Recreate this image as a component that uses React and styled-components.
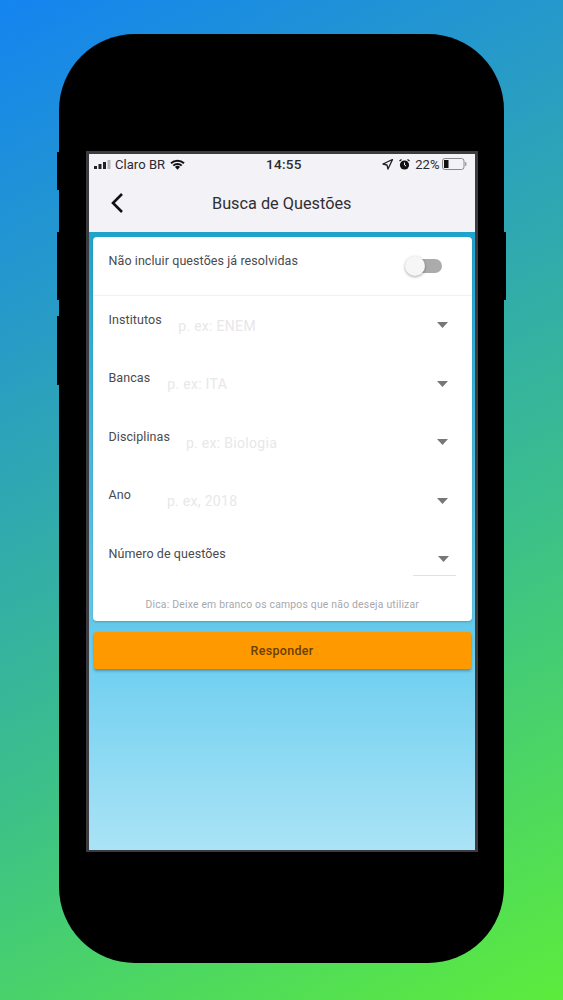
import React from "react";
import styled, { createGlobalStyle } from "styled-components";

const Global = createGlobalStyle`
  html, body { margin: 0; padding: 0; }
  body { width: 563px; height: 1000px; overflow: hidden; font-family: "Roboto", "Liberation Sans", sans-serif; }
`;

const Stage = styled.div`
  width: 563px;
  height: 1000px;
  padding: 34px 59px 37px;
  box-sizing: border-box;
  background: linear-gradient(152deg, #1484f0 0%, #2a9fc0 30%, #3cc08a 62%, #5cec3c 100%);
`;

const Phone = styled.div`
  position: relative;
  width: 445px;
  height: 929px;
  padding-top: 117px;
  padding-left: 27px;
  box-sizing: border-box;
  background: #000;
  border-radius: 76px;
`;

const SideButton = styled.span`
  position: absolute;
  width: 3px;
  background: #000;
  top: ${(p) => p.$top}px;
  height: ${(p) => p.$height}px;
  ${(p) => (p.$right ? "right: -2px;" : "left: -2px;")}
`;

const Screen = styled.div`
  width: 392px;
  height: 701px;
  box-sizing: border-box;
  border: 3px solid #3c3c40;
  border-bottom-width: 2px;
  display: flex;
  flex-direction: column;
`;

const TopArea = styled.div`
  height: 78px;
  flex: none;
  background: #f3f2f6;
`;

const StatusBar = styled.div`
  height: 20px;
  display: flex;
  align-items: center;
  padding: 0 0 0 5px;
  color: #2a2a2e;
`;

const StatusLeft = styled.div`
  display: flex;
  align-items: center;
  gap: 4px;
  width: 172px;
`;

const Carrier = styled.span`
  font-size: 13px;
  letter-spacing: 0.05px;
`;

const Clock = styled.span`
  font-weight: 500;
  font-size: 13.5px;
  width: 50px;
  letter-spacing: 0.3px;
`;

const StatusRight = styled.div`
  margin-left: auto;
  display: flex;
  align-items: center;
  gap: 5.5px;
  padding-right: 8px;
`;

const Header = styled.div`
  height: 58px;
  display: flex;
  align-items: center;
  padding-left: 21px;
`;

const Title = styled.h1`
  margin: 0 0 0 88px;
  font-size: 16.3px;
  font-weight: 400;
  color: #2f2f33;
  white-space: nowrap;
`;

const Body = styled.div`
  flex: 1;
  padding: 5px 3.5px 0 4px;
  display: flex;
  flex-direction: column;
  background: linear-gradient(180deg, #1fa3cd 0%, #62c8ea 63%, #72d0f0 71%, #aae3f6 100%);
`;

const Card = styled.div`
  height: 384px;
  box-sizing: border-box;
  background: #fff;
  border-radius: 4px;
  box-shadow: 0 1px 2px rgba(0, 0, 0, 0.22);
  display: flex;
  flex-direction: column;
`;

const ToggleRow = styled.div`
  height: 59px;
  flex: none;
  box-sizing: border-box;
  border-bottom: 1px solid #f1f1f2;
  padding: 16px 29.5px 0 15.5px;
  display: flex;
  justify-content: space-between;
  align-items: flex-start;
`;

const Label = styled.span`
  font-size: 12.5px;
  line-height: 15px;
  color: #4a4a4e;
  letter-spacing: 0.08px;
  white-space: nowrap;
`;

const Switch = styled.div`
  position: relative;
  width: 36px;
  height: 14px;
  margin-top: 6px;
  background: #ababab;
  border-radius: 7px;
`;

const Knob = styled.span`
  position: absolute;
  left: -1px;
  top: -3px;
  width: 20px;
  height: 20px;
  border-radius: 50%;
  background: #f6f6f7;
  box-shadow: 0 1px 3px rgba(0, 0, 0, 0.35);
`;

const FieldRow = styled.div`
  height: 58.5px;
  flex: none;
  box-sizing: border-box;
  padding: 15.5px 23.5px 0 15.5px;
  display: flex;
  align-items: flex-start;
`;

const Placeholder = styled.span`
  margin-left: ${(p) => p.$gap}px;
  margin-top: 6px;
  font-size: 14px;
  line-height: 16px;
  color: #e8e7e9;
  letter-spacing: 0.3px;
  white-space: nowrap;
`;

const ArrowWrap = styled.div`
  margin-left: auto;
  margin-top: 10.5px;
  width: 11px;
  display: flex;
`;

const CountControl = styled.div`
  margin-left: auto;
  margin-right: -7.5px;
  width: 43px;
  height: 30px;
  padding: 10px 7px 0 0;
  box-sizing: border-box;
  border-bottom: 1px solid #e2e2e4;
  display: flex;
  justify-content: flex-end;
`;

const Tip = styled.p`
  margin: auto 0 10px;
  text-align: center;
  font-size: 10.4px;
  line-height: 13px;
  color: #a8a8ac;
  letter-spacing: 0.2px;
`;

const Submit = styled.button`
  margin: 11px 1px 0 0.5px;
  height: 37px;
  border: 0;
  border-radius: 2px;
  background: #ff9900;
  color: #6a3f00;
  font: 500 12.5px "Roboto", sans-serif;
  letter-spacing: 0.3px;
  box-shadow: 0 2px 3px rgba(0, 0, 0, 0.3);
`;

const Caret = () => (
  <svg width="11" height="6" viewBox="0 0 11 6"><path d="M0 0h11L5.5 6z" fill="#77777a" /></svg>
);

const fields = [
  { label: "Institutos", ph: "p. ex: ENEM", gap: 16.5 },
  { label: "Bancas", ph: "p. ex: ITA", gap: 17 },
  { label: "Disciplinas", ph: "p. ex: Biologia", gap: 16 },
  { label: "Ano", ph: "p. ex, 2018", gap: 36 },
];

export default function App() {
  return (
    <Stage>
      <Global />
      <Phone>
        <SideButton $top={118} $height={38} />
        <SideButton $top={198} $height={68} />
        <SideButton $top={282} $height={69} />
        <SideButton $right $top={198} $height={68} />
        <Screen>
          <TopArea>
            <StatusBar>
              <StatusLeft>
                <svg width="17" height="9" viewBox="0 0 17 9">
                  <rect x="0" y="6" width="3" height="3" fill="#222" />
                  <rect x="4.5" y="4" width="3" height="5" fill="#222" />
                  <rect x="9" y="2" width="3" height="7" fill="#222" />
                  <rect x="13.5" y="0" width="3" height="9" fill="#b5b5b8" />
                </svg>
                <Carrier>Claro BR</Carrier>
                <svg width="15" height="11" viewBox="0 0 15 11" style={{ marginLeft: 1 }}>
                  <path d="M1 4.2 A9.5 9.5 0 0 1 14 4.2" stroke="#111" strokeWidth="2" fill="none" />
                  <path d="M3.3 6.6 A6 6 0 0 1 11.7 6.6" stroke="#111" strokeWidth="2" fill="none" />
                  <path d="M5 8 A3 3 0 0 1 10 8 L7.5 10.8z" fill="#111" />
                </svg>
              </StatusLeft>
              <Clock>14:55</Clock>
              <StatusRight>
                <svg width="11" height="11" viewBox="0 0 11 11">
                  <path d="M10.5.5L1 5l4 1 1 4z" fill="none" stroke="#222" strokeWidth="1.3" strokeLinejoin="round" />
                </svg>
                <svg width="11" height="11" viewBox="0 0 11 11">
                  <circle cx="5.5" cy="6" r="4.6" fill="#111" />
                  <path d="M5.5 3.5V6l1.6 1" stroke="#f3f2f6" strokeWidth="1" fill="none" />
                  <path d="M.5 2L2.5.5M10.5 2L8.5.5" stroke="#111" strokeWidth="1.2" />
                </svg>
                <Carrier>22%</Carrier>
                <svg width="25" height="12" viewBox="0 0 25 12" style={{ marginLeft: -3 }}>
                  <rect x="0.5" y="0.5" width="21.5" height="11" rx="2.5" fill="none" stroke="#8a8a8e" />
                  <rect x="2" y="2" width="4.5" height="8" fill="#111" />
                  <rect x="23" y="4" width="1.4" height="4" rx="0.7" fill="#9a9a9e" />
                </svg>
              </StatusRight>
            </StatusBar>
            <Header>
              <svg width="14" height="22" viewBox="0 0 14 22">
                <path d="M12 2L3 11l9 9" stroke="#111" strokeWidth="2.6" fill="none" />
              </svg>
              <Title>Busca de Questões</Title>
            </Header>
          </TopArea>
          <Body>
            <Card>
              <ToggleRow>
                <Label>Não incluir questões já resolvidas</Label>
                <Switch><Knob /></Switch>
              </ToggleRow>
              {fields.map((f) => (
                <FieldRow key={f.label}>
                  <Label>{f.label}</Label>
                  <Placeholder $gap={f.gap}>{f.ph}</Placeholder>
                  <ArrowWrap><Caret /></ArrowWrap>
                </FieldRow>
              ))}
              <FieldRow>
                <Label>Número de questões</Label>
                <CountControl><Caret /></CountControl>
              </FieldRow>
              <Tip>Dica: Deixe em branco os campos que não deseja utilizar</Tip>
            </Card>
            <Submit>Responder</Submit>
          </Body>
        </Screen>
      </Phone>
    </Stage>
  );
}
